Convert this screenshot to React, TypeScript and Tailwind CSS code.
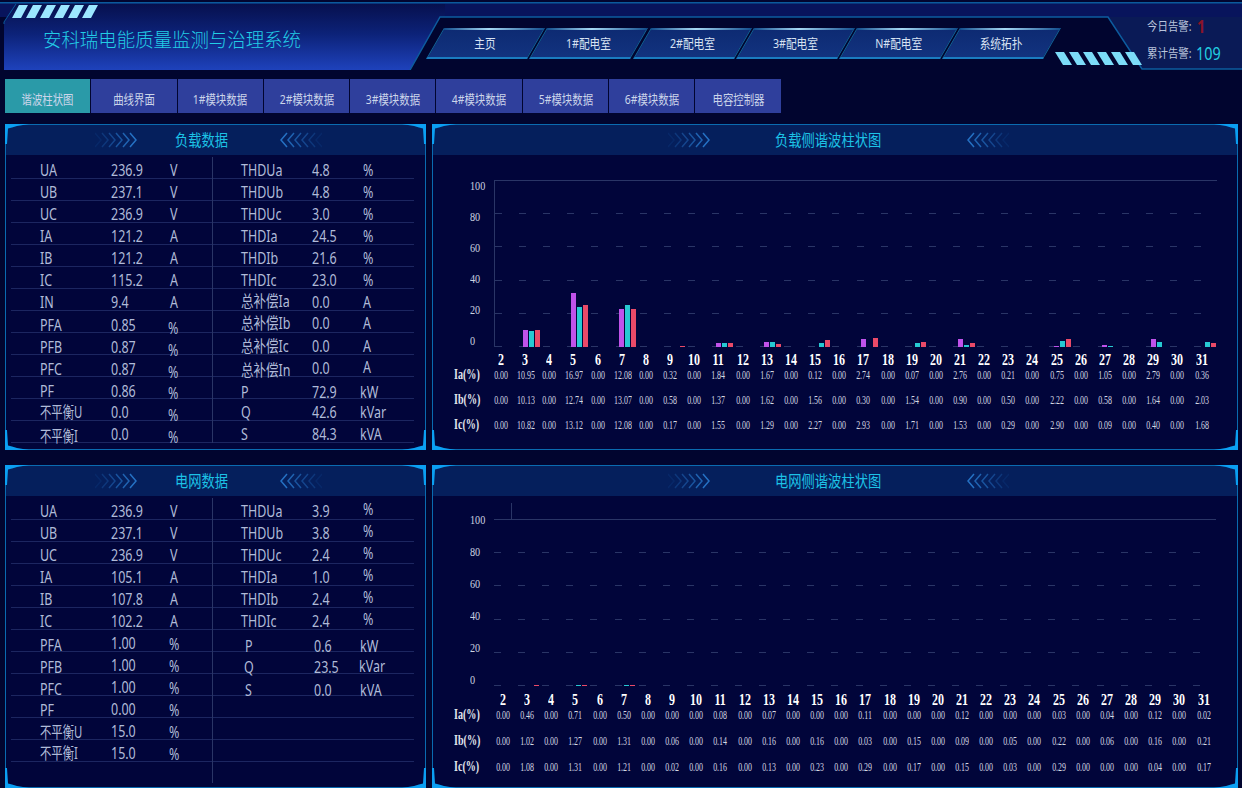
import React from "react";

const NAV = ["主页", "1#配电室", "2#配电室", "3#配电室", "N#配电室", "系统拓扑"];
const TABS = ["谐波柱状图", "曲线界面", "1#模块数据", "2#模块数据", "3#模块数据", "4#模块数据", "5#模块数据", "6#模块数据", "电容控制器"];
const COLS = Array.from({ length: 30 }, (_, i) => i + 2);

type Row = { l: string; v: string; u: string; lc?: string; vc?: string; uc?: string; narrow?: boolean };

const Y1 = "translate-y-[1px]";
const Y2 = "translate-y-[2px]";
const Y4 = "translate-y-[4px]";
const Y5 = "translate-y-[5px]";
const Y6 = "translate-y-[6px]";
const Y7 = "translate-y-[7px]";

const load1: Row[] = [
  { l: "UA", v: "236.9", u: "V" },
  { l: "UB", v: "237.1", u: "V" },
  { l: "UC", v: "236.9", u: "V" },
  { l: "IA", v: "121.2", u: "A" },
  { l: "IB", v: "121.2", u: "A" },
  { l: "IC", v: "115.2", u: "A" },
  { l: "IN", v: "9.4", u: "A" },
  { l: "PFA", v: "0.85", u: "%", lc: Y4, vc: Y4, uc: `${Y7} -ml-[2px]` },
  { l: "PFB", v: "0.87", u: "%", lc: Y4, vc: Y4, uc: `${Y7} -ml-[2px]` },
  { l: "PFC", v: "0.87", u: "%", lc: Y4, vc: Y4, uc: `${Y7} -ml-[2px]` },
  { l: "PF", v: "0.86", u: "%", lc: Y4, vc: Y4, uc: `${Y6} -ml-[2px]` },
  { l: "不平衡U", v: "0.0", u: "%", uc: `${Y6} -ml-[2px]`, narrow: true },
  { l: "不平衡I", v: "0.0", u: "%", lc: Y5, uc: `${Y6} -ml-[2px]`, narrow: true },
];
const load2: Row[] = [
  { l: "THDUa", v: "4.8", u: "%" },
  { l: "THDUb", v: "4.8", u: "%" },
  { l: "THDUc", v: "3.0", u: "%" },
  { l: "THDIa", v: "24.5", u: "%" },
  { l: "THDIb", v: "21.6", u: "%" },
  { l: "THDIc", v: "23.0", u: "%" },
  { l: "总补偿Ia", v: "0.0", u: "A", lc: Y2 },
  { l: "总补偿Ib", v: "0.0", u: "A", lc: Y2, vc: Y2, uc: Y2 },
  { l: "总补偿Ic", v: "0.0", u: "A" },
  { l: "总补偿In", v: "0.0", u: "A", lc: Y5, uc: Y2 },
  { l: "P", v: "72.9", u: "kW", lc: Y5, vc: Y5, uc: `${Y5} -ml-[3px]` },
  { l: "Q", v: "42.6", u: "kVar", uc: "translate-y-[3px] -ml-[3px]" },
  { l: "S", v: "84.3", u: "kVA", uc: "translate-y-[3px] -ml-[3px]" },
];
const grid1: Row[] = [
  { l: "UA", v: "236.9", u: "V" },
  { l: "UB", v: "237.1", u: "V" },
  { l: "UC", v: "236.9", u: "V" },
  { l: "IA", v: "105.1", u: "A" },
  { l: "IB", v: "107.8", u: "A" },
  { l: "IC", v: "102.2", u: "A" },
  { l: "PFA", v: "1.00", u: "%", lc: Y5, uc: `${Y4} -ml-[1px]` },
  { l: "PFB", v: "1.00", u: "%", lc: Y5, uc: `${Y4} -ml-[1px]` },
  { l: "PFC", v: "1.00", u: "%", lc: Y5, uc: `${Y4} -ml-[1px]` },
  { l: "PF", v: "0.00", u: "%", lc: Y4, uc: `${Y4} -ml-[1px]` },
  { l: "不平衡U", v: "15.0", u: "%", lc: Y4, uc: `${Y4} -ml-[1px]`, narrow: true },
  { l: "不平衡I", v: "15.0", u: "%", uc: `${Y4} -ml-[1px]`, narrow: true },
];
const grid2: Row[] = [
  { l: "THDUa", v: "3.9", u: "%", uc: Y1 },
  { l: "THDUb", v: "3.8", u: "%", uc: Y1 },
  { l: "THDUc", v: "2.4", u: "%", uc: Y1 },
  { l: "THDIa", v: "1.0", u: "%", uc: Y1 },
  { l: "THDIb", v: "2.4", u: "%", uc: Y1 },
  { l: "THDIc", v: "2.4", u: "%", uc: Y1 },
  { l: "P", v: "0.6", u: "kW", lc: `${Y6} ml-[4px]`, vc: `${Y6} ml-[2px]`, uc: `${Y6} -ml-[3px]` },
  { l: "Q", v: "23.5", u: "kVar", lc: `${Y5} ml-[3px]`, vc: `${Y5} ml-[2px]`, uc: `${Y4} -ml-[4px]` },
  { l: "S", v: "0.0", u: "kVA", lc: `${Y6} ml-[4px]`, vc: `${Y6} ml-[2px]`, uc: `${Y6} -ml-[3px]` },
  { l: "", v: "", u: "" },
  { l: "", v: "", u: "" },
  { l: "", v: "", u: "" },
];

const split = (s: string) => s.split(" ");
const chart1 = {
  ia: split("0.00 10.95 0.00 16.97 0.00 12.08 0.00 0.32 0.00 1.84 0.00 1.67 0.00 0.12 0.00 2.74 0.00 0.07 0.00 2.76 0.00 0.21 0.00 0.75 0.00 1.05 0.00 2.79 0.00 0.36"),
  ib: split("0.00 10.13 0.00 12.74 0.00 13.07 0.00 0.58 0.00 1.37 0.00 1.62 0.00 1.56 0.00 0.30 0.00 1.54 0.00 0.90 0.00 0.50 0.00 2.22 0.00 0.58 0.00 1.64 0.00 2.03"),
  ic: split("0.00 10.82 0.00 13.12 0.00 12.08 0.00 0.17 0.00 1.55 0.00 1.29 0.00 2.27 0.00 2.93 0.00 1.71 0.00 1.53 0.00 0.29 0.00 2.90 0.00 0.09 0.00 0.40 0.00 1.68"),
};
const chart2 = {
  ia: split("0.00 0.46 0.00 0.71 0.00 0.50 0.00 0.00 0.00 0.08 0.00 0.07 0.00 0.00 0.00 0.11 0.00 0.00 0.00 0.12 0.00 0.00 0.00 0.03 0.00 0.04 0.00 0.12 0.00 0.02"),
  ib: split("0.00 1.02 0.00 1.27 0.00 1.31 0.00 0.06 0.00 0.14 0.00 0.16 0.00 0.16 0.00 0.03 0.00 0.15 0.00 0.09 0.00 0.05 0.00 0.22 0.00 0.06 0.00 0.16 0.00 0.21"),
  ic: split("0.00 1.08 0.00 1.31 0.00 1.21 0.00 0.02 0.00 0.16 0.00 0.13 0.00 0.23 0.00 0.29 0.00 0.17 0.00 0.15 0.00 0.03 0.00 0.29 0.00 0.00 0.00 0.04 0.00 0.17"),
};
const bars1: Record<number, number[]> = {
  3: [17, 16, 17], 5: [54, 40, 42], 7: [38, 42, 38], 9: [0, 0, 1], 11: [4, 4, 4], 13: [5, 5, 3], 15: [0, 4, 7],
  17: [8, 0, 9], 19: [0, 4, 5], 21: [8, 2, 4], 25: [1, 6, 8], 27: [2, 1, 0], 29: [8, 5, 0], 31: [0, 5, 4],
};
const bars2: Record<number, number[]> = { 3: [0, 0, 1], 5: [0, 1, 1], 7: [0, 1, 1] };

function Squeeze({ children, className, narrow }: { children: React.ReactNode; className?: string; narrow?: boolean }) {
  return (
    <span className={`inline-block origin-left whitespace-nowrap ${narrow ? "scale-x-[0.71]" : "scale-x-[0.78]"} ${className ?? "translate-y-[3px]"}`}>
      {children}
    </span>
  );
}

function DataRow({ r, pad, valW }: { r: Row; pad: string; valW: string }) {
  return (
    <div className={`flex h-[22px] shrink-0 border-b border-[#1c2660] text-[16px] leading-[21px] text-[#b0bbd8] ${pad}`}>
      <div className="w-[71px] shrink-0"><Squeeze className={r.lc} narrow={r.narrow}>{r.l}</Squeeze></div>
      <div className={`${valW} shrink-0`}><Squeeze className={r.vc}>{r.v}</Squeeze></div>
      <div className="w-[40px] shrink-0"><Squeeze className={r.uc}>{r.u}</Squeeze></div>
    </div>
  );
}

function Chevrons({ flip }: { flip?: boolean }) {
  const xs = [0, 7, 14, 21, 28, 35];
  return (
    <svg width="42" height="16" viewBox="0 0 42 16" className={`shrink-0 ${flip ? "-scale-x-100" : ""}`} fill="none">
      {xs.map((x, i) => (
        <path key={x} d={`M${x} 1 L${x + 6} 8 L${x} 15`} stroke="#2c80d6" strokeWidth="1.5" opacity={0.1 + i * 0.15} />
      ))}
    </svg>
  );
}

function Corner({ className }: { className: string }) {
  return (
    <svg width="26" height="20" viewBox="0 0 26 20" className={`pointer-events-none absolute ${className}`}>
      <polygon points="0,0 24,0 12,2 7,3.5 3,4.5 2,20 0,20" fill="#0b9ff2" />
    </svg>
  );
}

function Panel({ className, head, children }: { className: string; head: React.ReactNode; children: React.ReactNode }) {
  return (
    <section className={`relative flex flex-col border border-[#0a6bb0] bg-[#01053a] ${className}`}>
      <Corner className="-left-px -top-px" />
      <Corner className="-right-px -top-px -scale-x-100" />
      <Corner className="-bottom-px -left-px -scale-y-100" />
      <Corner className="-bottom-px -right-px -scale-100" />
      <div className="flex h-[30px] shrink-0 items-center bg-[#051f5c] text-[16px] text-[#1cc2e6]">{head}</div>
      {children}
    </section>
  );
}

function Title({ children }: { children: React.ReactNode }) {
  return <span className="inline-block origin-left scale-x-[0.83] whitespace-nowrap">{children}</span>;
}

function DataPanel({ className, title, left, right, bodyClass }: { className: string; title: string; left: Row[]; right: Row[]; bodyClass: string }) {
  return (
    <Panel
      className={className}
      head={
        <div className="flex items-center pl-[89px]">
          <Chevrons />
          <div className="ml-[38px] w-[105px]"><Title>{title}</Title></div>
          <Chevrons flip />
        </div>
      }
    >
      <div className={`mx-[5px] mt-[2px] flex ${bodyClass}`}>
        <div className="w-[201px] shrink-0">
          {left.map((r) => <DataRow key={r.l} r={r} pad="pl-[29px]" valW="w-[59px]" />)}
        </div>
        <div className="w-[202px] shrink-0 border-l border-[#2a3566]">
          {right.map((r, i) => <DataRow key={i} r={r} pad="pl-[28px]" valW="w-[51px]" />)}
        </div>
      </div>
    </Panel>
  );
}

function Bars({ data }: { data: Record<number, number[]> }) {
  const colors = ["bg-[#c052ea]", "bg-[#27c9d2]", "bg-[#ea4a68]"];
  return (
    <div className="grid grid-cols-[repeat(30,24.17px)] [grid-area:1/1]">
      {COLS.map((c) => (
        <div key={c} className="flex items-end justify-center gap-px">
          {(data[c] ?? []).map((h, i) => (
            <div key={i} className={`w-[5px] ${colors[i]}`} style={{ height: h }} />
          ))}
        </div>
      ))}
    </div>
  );
}

const DASH = "h-px bg-[repeating-linear-gradient(90deg,#2a3566_0,#2a3566_7px,transparent_7px,transparent_24.1px)]";

function Chart({
  title, values, bars, labelsClass, plotClass, bodyClass, tableClass, rowsClass, colsClass, nameClass, className, axis,
}: {
  title: string;
  values: { ia: string[]; ib: string[]; ic: string[] };
  bars: Record<number, number[]>;
  labelsClass: string;
  plotClass: string;
  bodyClass: string;
  tableClass: string;
  rowsClass: string;
  colsClass: string;
  nameClass: string;
  className: string;
  axis: boolean;
}) {
  const rows: [string, string[]][] = [["Ia(%)", values.ia], ["Ib(%)", values.ib], ["Ic(%)", values.ic]];
  return (
    <Panel
      className={className}
      head={
        <div className="flex items-center pl-[235px]">
          <Chevrons />
          <div className="ml-[65px] w-[192px]"><Title>{title}</Title></div>
          <Chevrons flip />
        </div>
      }
    >
      <div className={`flex flex-col [font-family:'Liberation_Serif','Noto_Sans_CJK_SC',serif] ${bodyClass}`}>
        <div className="flex items-start">
          <div className={`flex w-[61px] shrink-0 flex-col justify-between pl-[37px] text-[12px] leading-[12px] text-[#ccd2e0] ${labelsClass}`}>
            {["100", "80", "60", "40", "20", "0"].map((y) => (
              <span key={y} className="inline-block origin-left scale-x-[0.85]">{y}</span>
            ))}
          </div>
          <div className={`relative grid w-[725px] ${plotClass} ${axis ? "border-l border-[#2a3566]" : ""}`}>
            {!axis && <div className="absolute -top-[16px] left-[17px] h-[17px] w-px bg-[#2a3566]" />}
            <div className="flex flex-col justify-between pr-[3px] [grid-area:1/1]">
              <div className="h-px bg-[#2a3566]" />
              <div className={DASH} />
              <div className={DASH} />
              <div className={DASH} />
              <div className={DASH} />
              <div className={DASH} />
            </div>
            <Bars data={bars} />
          </div>
        </div>
        <div className={`flex flex-col ${tableClass}`}>
          <div className={`grid h-[16px] grid-cols-[repeat(30,24.17px)] text-center text-[16px] font-bold leading-[16px] text-white ${colsClass}`}>
            {COLS.map((c) => <span key={c} className="scale-x-[0.75]">{c}</span>)}
          </div>
          <div className={`flex flex-col ${rowsClass}`}>
            {rows.map(([name, vals]) => (
              <div key={name} className="flex h-[14px] items-center">
                <div className={`shrink-0 pl-[21px] text-[14px] font-bold leading-[14px] text-[#e2e5ee] ${nameClass}`}>
                  <span className="inline-block origin-left scale-x-[0.72] whitespace-nowrap">{name}</span>
                </div>
                <div className="grid grid-cols-[repeat(30,24.17px)] text-center text-[12px] leading-[14px] text-[#d4d8e2]">
                  {vals.map((v, i) => <span key={i} className="scale-x-[0.66] whitespace-nowrap">{v}</span>)}
                </div>
              </div>
            ))}
          </div>
        </div>
      </div>
    </Panel>
  );
}

function HeaderFrame() {
  const tl = [0, 1, 2, 3, 4, 5];
  return (
    <svg width="1242" height="70" viewBox="0 0 1242 70" className="absolute left-0 top-0">
      <defs>
        <linearGradient id="hb" x1="0" y1="0" x2="0" y2="1">
          <stop offset="0" stopColor="#07104e" />
          <stop offset="0.45" stopColor="#0c2278" />
          <stop offset="1" stopColor="#1e42bc" />
        </linearGradient>
      </defs>
      <rect x="0" y="3" width="1242" height="14" fill="#08145c" />
      <polygon points="4,70 4,22 16,4 445,4 445,17 440,17 410,70" fill="url(#hb)" />
      <polygon points="1108,17 1242,17 1242,69 1142,69" fill="#0a1a56" />
      <rect x="0" y="2" width="1242" height="1.5" fill="#0b5a9c" />
      <polyline points="4,24 4,22 16,4" fill="none" stroke="#0b5a9c" strokeWidth="1" />
      <polyline points="410,70 440,17 1108,17 1142,69 1242,69" fill="none" stroke="#0d5c9e" strokeWidth="1.5" />
      {tl.map((i) => {
        const x = 12 + i * 14;
        return <polygon key={i} points={`${x},18 ${x + 7},5 ${x + 16},5 ${x + 9},18`} fill="#9ce6ff" />;
      })}
      {tl.map((i) => {
        const x = 1055 + i * 14;
        return <polygon key={i} points={`${x},52 ${x + 9},52 ${x + 17},65 ${x + 8},65`} fill="#7cdcf8" />;
      })}
    </svg>
  );
}

function NavItem({ label }: { label: string }) {
  return (
    <div className="flex h-[31px] w-[101px] shrink-0 -skew-x-[30deg] flex-col border-x border-b-2 border-x-[#14689f] border-b-[#1a7cc0] bg-[linear-gradient(180deg,#0d2a72,#12337f)]">
      <div className="h-[2px] shrink-0 bg-[linear-gradient(90deg,#14508f,#a6d8f4_45%,#14508f)]" />
      <div className="flex flex-1 skew-x-[30deg] items-center justify-center text-[13px] text-[#d8e2f2]">
        <span className="inline-block scale-x-[0.82] whitespace-nowrap">{label}</span>
      </div>
    </div>
  );
}

export default function App() {
  return (
    <div className="h-[788px] w-[1242px] overflow-hidden bg-[#01052f] [font-family:'Noto_Sans','Noto_Sans_CJK_SC',sans-serif]">
      <header className="relative h-[70px]">
        <HeaderFrame />
        <div className="relative flex h-full items-start">
          <div className="w-[435px] shrink-0 pl-[43px] pt-[26px] text-[19px] leading-[28px] text-[#22cde6]">
            <span className="inline-block origin-left scale-x-[0.97] whitespace-nowrap font-light">安科瑞电能质量监测与治理系统</span>
          </div>
          <nav className="flex shrink-0 gap-[2.3px] pt-[28px]">
            {NAV.map((n) => <NavItem key={n} label={n} />)}
          </nav>
          <div className="ml-[95px] flex flex-col pt-[15px] text-[12px] text-[#b9c4dc]">
            <div className="flex h-[23px] items-center">
              <span className="inline-block w-[50px] origin-left scale-x-[0.87] whitespace-nowrap">今日告警:</span>
              <span className="inline-block origin-left scale-x-[0.8] text-[18px] font-bold text-[#8a1428]">1</span>
            </div>
            <div className="mt-[4px] flex h-[23px] items-center">
              <span className="inline-block w-[49px] origin-left scale-x-[0.87] whitespace-nowrap">累计告警:</span>
              <span className="inline-block origin-left scale-x-[0.8] text-[18px] text-[#22cde0]">109</span>
            </div>
          </div>
        </div>
      </header>

      <div className="mt-[9px] flex h-[34px] pl-[5px]">
        {TABS.map((t, i) => (
          <div
            key={t}
            className={`flex w-[86.3px] shrink-0 items-center justify-center border-r border-[#01052f] pt-[7px] text-[13px] text-[#cbd5ea] ${i === 0 ? "bg-[#2a9aa8]" : "bg-[#2f3f9c]"}`}
          >
            <span className="inline-block scale-x-[0.8] whitespace-nowrap">{t}</span>
          </div>
        ))}
      </div>

      <main className="mt-[11px] grid grid-cols-[421px_806px] grid-rows-[326px_326px] gap-x-[6px] gap-y-[15px] pl-[5px]">
        <DataPanel className="h-[326px]" title="负载数据" left={load1} right={load2} bodyClass="h-[286px]" />
        <Chart
          className="h-[326px]"
          title="负载侧谐波柱状图"
          values={chart1}
          bars={bars1}
          bodyClass="pt-[25px]"
          labelsClass="h-[167px]"
          plotClass="h-[167px]"
          tableClass="mt-[5px]"
          rowsClass="gap-[11px]"
          colsClass="ml-[56px]"
          nameClass="w-[56px]"
          axis
        />
        <DataPanel className="h-[323px]" title="电网数据" left={grid1} right={grid2} bodyClass="h-[285px]" />
        <Chart
          className="h-[323px]"
          title="电网侧谐波柱状图"
          values={chart2}
          bars={bars2}
          bodyClass="pt-[23px]"
          labelsClass="-mt-[5px] h-[172px]"
          plotClass="h-[167px]"
          tableClass="mt-[6px]"
          rowsClass="gap-[12px]"
          colsClass="ml-[58px]"
          nameClass="w-[58px]"
          axis={false}
        />
      </main>
    </div>
  );
}
